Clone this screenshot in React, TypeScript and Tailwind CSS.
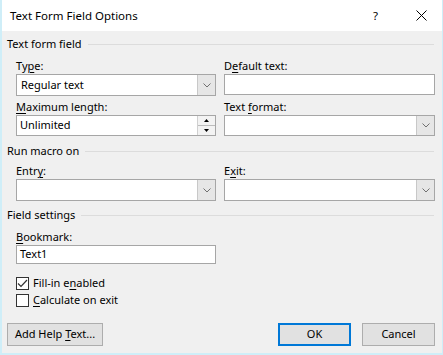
import React from "react";

const FONT = { fontFamily: '"Segoe UI", "Noto Sans", "Open Sans", sans-serif' };

function U({ children }: { children: React.ReactNode }) {
  return <span className="underline underline-offset-2 decoration-1">{children}</span>;
}

function GroupHeader({ title, mt }: { title: string; mt: string }) {
  return (
    <div className={`flex items-center gap-[6px] pl-[5px] pr-[8px] h-[16px] ${mt}`}>
      <span className="whitespace-nowrap">{title}</span>
      <div className="flex-1 h-px bg-[#dcdcdc]" />
    </div>
  );
}

function Chevron() {
  return (
    <svg width="8" height="5" viewBox="0 0 8 5" fill="none">
      <path d="M0.5 0.5 L4 4 L7.5 0.5" stroke="#707070" strokeWidth="1" />
    </svg>
  );
}

function Select({ value, h = "h-[22px]" }: { value?: string; h?: string }) {
  return (
    <div className={`flex ${h} border border-[#a6a6a6] bg-white`}>
      <div className="flex-1 flex items-center pl-[4px] truncate">{value}</div>
      <div className="w-[18px] flex items-center justify-center bg-[#e6e6e6] border-l border-[#c8c8c8]">
        <Chevron />
      </div>
    </div>
  );
}

function TextBox({ value, h = "h-[21px]" }: { value?: string; h?: string }) {
  return (
    <div className={`flex items-center ${h} border border-[#a6a6a6] bg-white pl-[3px]`}>
      {value}
    </div>
  );
}

function Spin({ value }: { value: string }) {
  return (
    <div className="flex h-[21px] border border-[#a6a6a6] bg-white">
      <div className="flex-1 flex items-center pl-[3px]">{value}</div>
      <div className="w-[18px] flex flex-col border-l border-[#d0d0d0] bg-[#f3f3f3]">
        <div className="flex-1 flex items-center justify-center border-b border-[#bcbcbc]">
          <svg width="5" height="3" viewBox="0 0 5 3">
            <path d="M0 3 L2.5 0 L5 3 Z" fill="#000" />
          </svg>
        </div>
        <div className="flex-1 flex items-center justify-center">
          <svg width="5" height="3" viewBox="0 0 5 3">
            <path d="M0 0 L2.5 3 L5 0 Z" fill="#000" />
          </svg>
        </div>
      </div>
    </div>
  );
}

function Label({ children, mt = "" }: { children: React.ReactNode; mt?: string }) {
  return <div className={`h-[16px] leading-[16px] ${mt}`}>{children}</div>;
}

function Checkbox({ checked, children, mt }: { checked: boolean; children: React.ReactNode; mt: string }) {
  return (
    <div className={`flex items-center gap-[4px] h-[16px] pl-[14px] ${mt}`}>
      <div className="w-[13px] h-[13px] border border-[#333333] bg-white flex items-center justify-center">
        {checked && (
          <svg width="11" height="9" viewBox="0 0 11 9" fill="none">
            <path d="M1 4.5 L4 7.5 L10 1" stroke="#333333" strokeWidth="1.2" />
          </svg>
        )}
      </div>
      <span>{children}</span>
    </div>
  );
}

export default function App() {
  return (
    <div
      className="w-[443px] h-[355px] bg-[#f0f0f0] flex flex-col text-[11px] text-black border-l-2 border-r border-b-2 border-[#cfeef8] overflow-hidden"
      style={FONT}
    >
      <div className="h-[31px] shrink-0 bg-white flex items-center pl-[8px] pr-[15px] text-[11.5px]">
        <span className="flex-1">Text Form Field Options</span>
        <span className="mr-[38px]">?</span>
        <svg width="11" height="11" viewBox="0 0 11 11">
          <path d="M0.5 0.5 L10.5 10.5 M10.5 0.5 L0.5 10.5" stroke="#000" strokeWidth="1" />
        </svg>
      </div>

      <GroupHeader title="Text form field" mt="mt-[5px]" />
      <div className="grid grid-cols-[200px_211px] gap-x-[8px] pl-[14px]">
        <div>
          <Label mt="mt-[6px]">
            Ty<U>p</U>e:
          </Label>
          <Select value="Regular text" />
          <Label mt="mt-[3px]">
            <U>M</U>aximum length:
          </Label>
          <Spin value="Unlimited" />
        </div>
        <div>
          <Label mt="mt-[6px]">
            D<U>e</U>fault text:
          </Label>
          <TextBox h="h-[21px]" />
          <Label mt="mt-[4px]">
            Text <U>f</U>ormat:
          </Label>
          <Select h="h-[21px]" />
        </div>
      </div>

      <GroupHeader title="Run macro on" mt="mt-[7px]" />
      <div className="grid grid-cols-[200px_211px] gap-x-[8px] pl-[14px]">
        <div>
          <Label mt="mt-[4px]">
            Entr<U>y</U>:
          </Label>
          <Select />
        </div>
        <div>
          <Label mt="mt-[4px]">
            E<U>x</U>it:
          </Label>
          <Select />
        </div>
      </div>

      <GroupHeader title="Field settings" mt="mt-[6px]" />
      <div className="pl-[14px] w-[214px]">
        <Label mt="mt-[6px]">
          <U>B</U>ookmark:
        </Label>
        <TextBox value="Text1" h="h-[19px]" />
      </div>

      <Checkbox checked mt="mt-[11px]">
        Fill-in e<U>n</U>abled
      </Checkbox>
      <Checkbox checked={false} mt="mt-[1px]">
        <U>C</U>alculate on exit
      </Checkbox>

      <div className="flex items-center mt-auto mb-[7px] pl-[5px] pr-[7px] gap-[11px]">
        <button className="w-[96px] h-[23px] bg-[#e1e1e1] border border-[#adadad]">
          Add Help <U>T</U>ext...
        </button>
        <div className="flex-1" />
        <button className="w-[73px] h-[23px] bg-[#e1e1e1] border-2 border-[#0078d7]">OK</button>
        <button className="w-[73px] h-[23px] bg-[#e1e1e1] border border-[#adadad]">Cancel</button>
      </div>
    </div>
  );
}
